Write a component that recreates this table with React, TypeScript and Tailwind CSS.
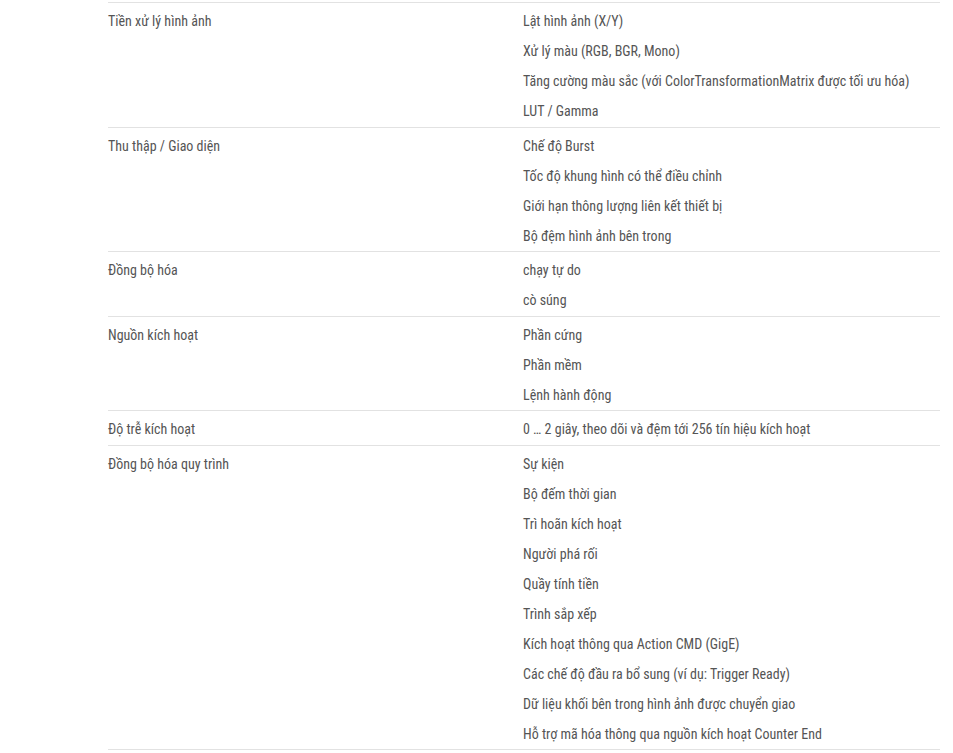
import React from 'react';

type SpecRow = {
    label: string;
    values: string[];
};

const rows: SpecRow[] = [
    {
        label: 'Tiền xử lý hình ảnh',
        values: [
            'Lật hình ảnh (X/Y)',
            'Xử lý màu (RGB, BGR, Mono)',
            'Tăng cường màu sắc (với ColorTransformationMatrix được tối ưu hóa)',
            'LUT / Gamma',
        ],
    },
    {
        label: 'Thu thập / Giao diện',
        values: [
            'Chế độ Burst',
            'Tốc độ khung hình có thể điều chỉnh',
            'Giới hạn thông lượng liên kết thiết bị',
            'Bộ đệm hình ảnh bên trong',
        ],
    },
    {
        label: 'Đồng bộ hóa',
        values: ['chạy tự do', 'cò súng'],
    },
    {
        label: 'Nguồn kích hoạt',
        values: ['Phần cứng', 'Phần mềm', 'Lệnh hành động'],
    },
    {
        label: 'Độ trễ kích hoạt',
        values: ['0 … 2 giây, theo dõi và đệm tới 256 tín hiệu kích hoạt'],
    },
    {
        label: 'Đồng bộ hóa quy trình',
        values: [
            'Sự kiện',
            'Bộ đếm thời gian',
            'Trì hoãn kích hoạt',
            'Người phá rối',
            'Quầy tính tiền',
            'Trình sắp xếp',
            'Kích hoạt thông qua Action CMD (GigE)',
            'Các chế độ đầu ra bổ sung (ví dụ: Trigger Ready)',
            'Dữ liệu khối bên trong hình ảnh được chuyển giao',
            'Hỗ trợ mã hóa thông qua nguồn kích hoạt Counter End',
        ],
    },
];

export default function App() {
    return (
        <div className="min-h-screen bg-white pt-[2px] pl-[108px]">
            <div
                className="w-[832px] border-b border-[#e2e2e2] text-[14px] text-[#555555]"
                style={{ fontFamily: '"Roboto Condensed", "Liberation Sans Narrow", "DejaVu Sans Condensed", Roboto, sans-serif' }}
            >
                {rows.map(row => (
                    <div key={row.label} className="grid grid-cols-[415px_1fr] border-t border-[#e2e2e2] pt-[3px] pb-[0.5px]">
                        <div className="leading-[30px]">{row.label}</div>
                        <div>
                            {row.values.map(v => (
                                <div key={v} className="leading-[30px]">{v}</div>
                            ))}
                        </div>
                    </div>
                ))}
            </div>
        </div>
    );
}
